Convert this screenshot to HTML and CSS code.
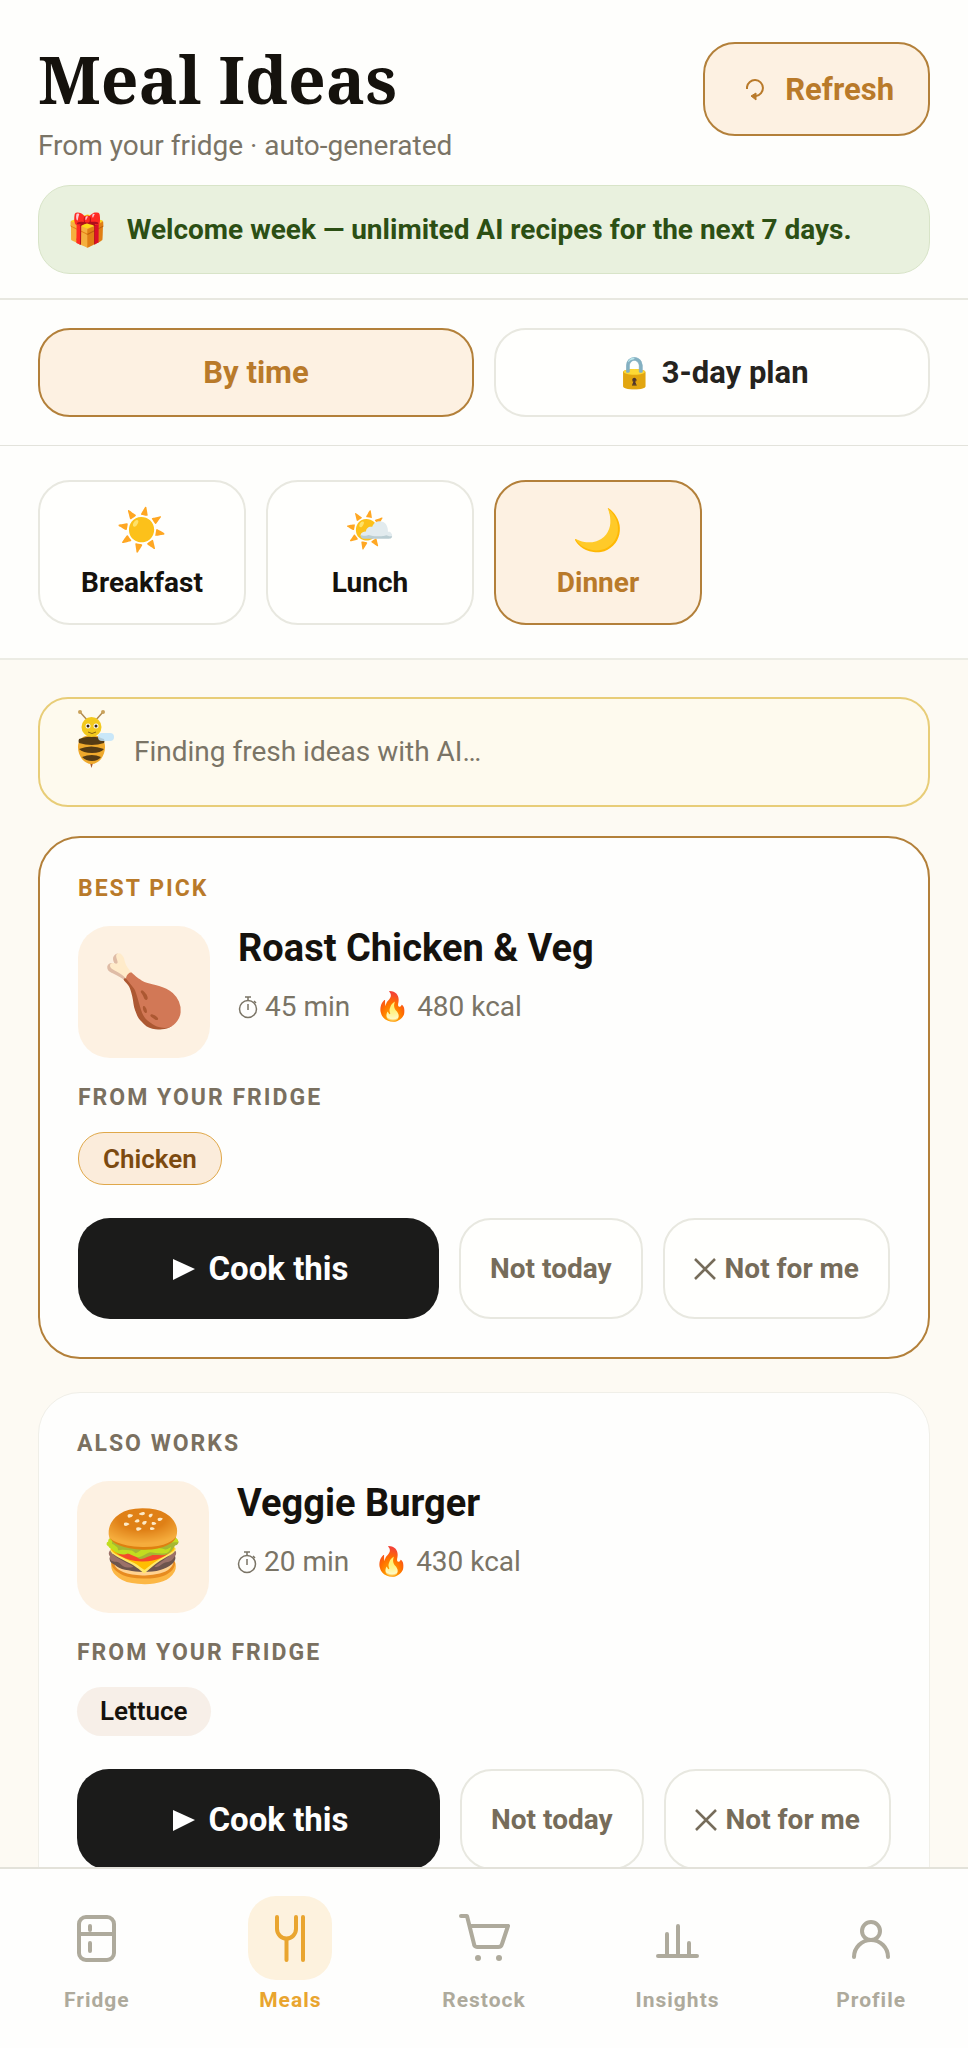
FILE: index.html
```html
<!DOCTYPE html>
<html lang="en">
<head>
    <meta charset="UTF-8">
    <meta name="viewport" content="width=device-width, initial-scale=1">
    <title>Meal Ideas</title>
    <link rel="stylesheet" href="styles.css">
</head>
<body>
    <header class="header">
        <div class="header-top">
            <div>
                <h1>Meal Ideas</h1>
                <p class="subtitle">From your fridge · auto-generated</p>
            </div>
            <button type="button" class="refresh">
                <svg class="refresh-icon" viewBox="0 0 20 24" fill="none" stroke="currentColor" stroke-width="2">
                    <path d="M2 12V10a8 8 0 1 1 9 9"/>
                    <path d="M11 16l-5 3 5 4z" fill="currentColor" stroke-width="1"/>
                </svg>
                Refresh
            </button>
        </div>
        <div class="banner">
            <span class="banner-icon">🎁</span>
            <span>Welcome week — unlimited AI recipes for the next 7 days.</span>
        </div>
    </header>

    <div class="tabs">
        <button type="button" class="tab active">By time</button>
        <button type="button" class="tab">🔒 3-day plan</button>
    </div>

    <div class="meals">
        <button type="button" class="meal"><span class="meal-icon">☀️</span>Breakfast</button>
        <button type="button" class="meal"><span class="meal-icon">🌤️</span>Lunch</button>
        <button type="button" class="meal active"><span class="meal-icon">🌙</span>Dinner</button>
    </div>

    <main class="content">
        <div class="loading">
            <svg class="bee" viewBox="0 0 40 60">
                <path d="M12 12L4 3M19 12l8-9" stroke="#b08a50" stroke-width="1.5" fill="none"/>
                <circle cx="4" cy="3" r="2" fill="#c9a15a"/>
                <circle cx="27" cy="3" r="2" fill="#c9a15a"/>
                <path d="M14 54l1.5 5 1.5-5z" fill="#a8552a"/>
                <path d="M15.5 26C6 26 2 31 2 38c0 9 6 17 13.5 17S29 47 29 38c0-7-4-12-13.5-12z" fill="#efa92c"/>
                <path d="M3 30q12-5 25 0 1 2 0 4-12 4-25 0-1-2 0-4zM3 40q12-5 25 0-3 4-12 4T3 40zM6 48q10-4 19 0-3 4-9 4T6 48z" fill="#553b14"/>
                <circle cx="15.5" cy="18" r="10" fill="#f3c91d"/>
                <circle cx="12" cy="17" r="2.5" fill="#fff"/>
                <circle cx="20" cy="17" r="2.5" fill="#fff"/>
                <circle cx="12" cy="17" r="1.5" fill="#332211"/>
                <circle cx="20" cy="17" r="1.5" fill="#332211"/>
                <path d="M12 23q4 3 8 0" stroke="#8a6512" stroke-width="1" fill="none"/>
                <rect x="22" y="24" width="16" height="8" rx="4" fill="#bfe3fa" opacity=".85"/>
            </svg>
            <span>Finding fresh ideas with AI…</span>
        </div>

        <article class="card best">
            <p class="label">Best pick</p>
            <div class="recipe">
                <div class="thumb">🍗</div>
                <div>
                    <h2>Roast Chicken &amp; Veg</h2>
                    <p class="meta">
                        <svg class="clock" viewBox="0 0 20 24" fill="none" stroke="currentColor" stroke-width="1.5">
                            <circle cx="10" cy="14" r="8.5"/>
                            <path d="M10 5V2M7 2h6M16 6l2 2M10 9v6"/>
                        </svg>
                        <span>45 min</span>
                        <span class="fire">🔥</span>
                        <span>480 kcal</span>
                    </p>
                </div>
            </div>
            <p class="label">From your fridge</p>
            <span class="chip">Chicken</span>
            <div class="actions">
                <button type="button" class="cook">
                    <svg class="play" viewBox="0 0 22 22" fill="currentColor"><path d="M0 1l22 10L0 22z"/></svg>
                    Cook this
                </button>
                <button type="button" class="skip">Not today</button>
                <button type="button" class="skip">
                    <svg class="cross" viewBox="0 0 22 22" fill="none" stroke="currentColor" stroke-width="2.5"><path d="M1 1l20 20M21 1L1 21"/></svg>
                    Not for me
                </button>
            </div>
        </article>

        <article class="card">
            <p class="label">Also works</p>
            <div class="recipe">
                <div class="thumb">🍔</div>
                <div>
                    <h2>Veggie Burger</h2>
                    <p class="meta">
                        <svg class="clock" viewBox="0 0 20 24" fill="none" stroke="currentColor" stroke-width="1.5">
                            <circle cx="10" cy="14" r="8.5"/>
                            <path d="M10 5V2M7 2h6M16 6l2 2M10 9v6"/>
                        </svg>
                        <span>20 min</span>
                        <span class="fire">🔥</span>
                        <span>430 kcal</span>
                    </p>
                </div>
            </div>
            <p class="label">From your fridge</p>
            <span class="chip">Lettuce</span>
            <div class="actions">
                <button type="button" class="cook">
                    <svg class="play" viewBox="0 0 22 22" fill="currentColor"><path d="M0 1l22 10L0 22z"/></svg>
                    Cook this
                </button>
                <button type="button" class="skip">Not today</button>
                <button type="button" class="skip">
                    <svg class="cross" viewBox="0 0 22 22" fill="none" stroke="currentColor" stroke-width="2.5"><path d="M1 1l20 20M21 1L1 21"/></svg>
                    Not for me
                </button>
            </div>
        </article>
    </main>

    <nav class="nav">
        <a href="#" class="nav-item">
            <span class="nav-icon">
                <svg viewBox="0 0 52 52"><rect x="8" y="5" width="35" height="43" rx="7"/><path d="M8 22h35M19 14v4M19 31v8"/></svg>
            </span>
            Fridge
        </a>
        <a href="#" class="nav-item active">
            <span class="nav-icon">
                <svg viewBox="0 0 52 52"><path d="M13 5v12a9.5 9.5 0 0 0 19 0V5M22.5 27v21M39 5v43"/></svg>
            </span>
            Meals
        </a>
        <a href="#" class="nav-item">
            <span class="nav-icon">
                <svg viewBox="0 0 52 52"><path d="M3 4h6l7 28a3 3 0 0 0 3 3h21a4 4 0 0 0 4-3l6-18H12"/><g class="wheels"><circle cx="20" cy="46" r="3"/><circle cx="41" cy="46" r="3"/></g></svg>
            </span>
            Restock
        </a>
        <a href="#" class="nav-item">
            <span class="nav-icon">
                <svg viewBox="0 0 52 52"><path d="M6 44h39M15 44V22M26 44V14M37 44V31"/></svg>
            </span>
            Insights
        </a>
        <a href="#" class="nav-item">
            <span class="nav-icon">
                <svg viewBox="0 0 52 52"><circle cx="26" cy="19" r="9"/><path d="M9 45a17 17 0 0 1 34 0"/></svg>
            </span>
            Profile
        </a>
    </nav>
</body>
</html>
```
FILE: styles.css
```css
* {
    box-sizing: border-box;
}

body {
    margin: 0;
    height: 100vh;
    display: flex;
    flex-direction: column;
    background-color: #fefefc;
    color: #15120d;
    font-family: Roboto, "Noto Color Emoji", sans-serif;
    font-size: 28px;
    line-height: 36px;
}

h1, h2, p {
    margin: 0;
}

button {
    font-family: inherit;
    color: inherit;
    font-weight: 700;
    background-color: #fffffd;
    border: 2px solid #e8e8e0;
    border-radius: 32px;
    padding: 0;
    cursor: pointer;
}

/* header */
.header {
    padding: 42px 38px 24px;
    border-bottom: 2px solid #e8e8e0;
}

.header-top {
    display: flex;
    justify-content: space-between;
    align-items: flex-start;
    margin-bottom: 21px;
}

h1 {
    font-family: "Noto Serif", "Liberation Serif", serif;
    font-size: 66px;
    line-height: 72px;
    margin-bottom: 14px;
}

.subtitle {
    color: #7a7466;
}

.refresh {
    display: flex;
    align-items: center;
    gap: 20px;
    height: 94px;
    padding: 0 34px 0 40px;
    font-size: 31px;
    color: #b97a2a;
    background-color: #fdf1e2;
    border-color: #b3803a;
}

.refresh-icon {
    width: 20px;
    height: 24px;
}

.banner {
    display: flex;
    align-items: center;
    gap: 20px;
    min-height: 89px;
    padding: 0 28px;
    border: 1px solid #d8e4c8;
    border-radius: 32px;
    background-color: #e9f1de;
    color: #2c4f14;
    font-weight: 700;
}

.banner-icon {
    font-size: 32px;
}

/* tabs and meal times */
.tabs {
    display: flex;
    gap: 20px;
    padding: 28px 38px;
    border-bottom: 1px solid #e3e3dc;
}

.tab {
    flex: 1;
    height: 89px;
    font-size: 31px;
    color: #25231e;
}

.active.tab,
.active.meal {
    color: #b97a2a;
    background-color: #fdf1e2;
    border-color: #b3803a;
}

.meals {
    display: grid;
    grid-template-columns: repeat(4, 1fr);
    gap: 20px;
    padding: 34px 38px 33px;
    border-bottom: 2px solid #ecece4;
}

.meal {
    display: flex;
    flex-direction: column;
    align-items: center;
    gap: 12px;
    padding: 24px 0 23px;
    font-size: 28px;
    line-height: 34px;
}

.meal-icon {
    font-size: 41px;
    line-height: 48px;
}

/* recipes */
.content {
    flex: 1;
    min-height: 0;
    overflow-y: auto;
    scrollbar-width: none;
    padding: 37px 38px;
    background-color: #fdfaf3;
}

.loading {
    display: flex;
    align-items: center;
    gap: 18px;
    min-height: 110px;
    padding: 0 36px;
    margin-bottom: 29px;
    border: 2px solid #e8cd78;
    border-radius: 30px;
    background-color: #fefaee;
    color: #7a7466;
}

.bee {
    width: 40px;
    height: 60px;
    margin-bottom: 26px;
}

.card {
    padding: 37px 38px 38px;
    margin-bottom: 33px;
    border: 1px solid #f0efe8;
    border-radius: 42px;
    background-color: #fefefd;
}

.card.best {
    border: 2px solid #b3803a;
}

.label {
    font-size: 23px;
    line-height: 28px;
    font-weight: 700;
    letter-spacing: 2px;
    text-transform: uppercase;
    color: #7a7060;
}

.best .label:first-child {
    color: #b97a2a;
}

.recipe {
    display: flex;
    gap: 28px;
    margin: 23px 0 26px;
}

.thumb {
    display: flex;
    align-items: center;
    justify-content: center;
    width: 132px;
    height: 132px;
    border-radius: 32px;
    background-color: #fdf1e2;
    font-size: 69px;
}

h2 {
    font-size: 38px;
    line-height: 44px;
    margin-bottom: 19px;
}

.meta {
    display: flex;
    align-items: center;
    gap: 7px;
    color: #7a7466;
}

.clock {
    width: 20px;
    height: 24px;
}

.fire {
    margin-left: 18px;
}

.chip {
    display: block;
    width: fit-content;
    margin: 20px 0 33px;
    padding: 6px 23px 7px;
    border-radius: 26px;
    background-color: #f7efe8;
    font-size: 26px;
    font-weight: 600;
}

.best .chip {
    padding: 8px 24px 7px;
    border: 1px solid #e0a84a;
    background-color: #fbecdb;
    color: #7c4a10;
}

.actions {
    display: flex;
    gap: 20px;
}

.actions button {
    display: flex;
    align-items: center;
    justify-content: center;
    height: 101px;
}

.cook {
    flex: 1;
    gap: 14px;
    padding-left: 4px;
    font-size: 33px;
    color: #fff;
    background-color: #1b1b1a;
    border: none;
}

.play {
    width: 22px;
    height: 22px;
}

.skip {
    gap: 9px;
    padding: 0 29px;
    font-size: 28px;
    color: #766c5a;
}

.cross {
    width: 22px;
    height: 22px;
}

/* bottom navigation */
.nav {
    display: flex;
    height: 181px;
    padding-top: 27px;
    border-top: 2px solid #e3e2da;
    background-color: #fefefd;
}

.nav-item {
    flex: 1;
    display: flex;
    flex-direction: column;
    align-items: center;
    gap: 6px;
    font-size: 21px;
    line-height: 28px;
    font-weight: 700;
    letter-spacing: 1px;
    color: #aeaa9c;
    text-decoration: none;
}

.nav-item.active {
    color: #e9a52f;
}

.nav-icon {
    display: flex;
    align-items: center;
    justify-content: center;
    width: 84px;
    height: 84px;
    border-radius: 28px;
}

.active .nav-icon {
    background-color: #fdf2de;
}

.nav-icon svg {
    width: 52px;
    height: 52px;
    fill: none;
    stroke: currentColor;
    stroke-width: 4;
    stroke-linecap: round;
    stroke-linejoin: round;
}

.nav-icon .wheels {
    fill: currentColor;
    stroke: none;
}
```
